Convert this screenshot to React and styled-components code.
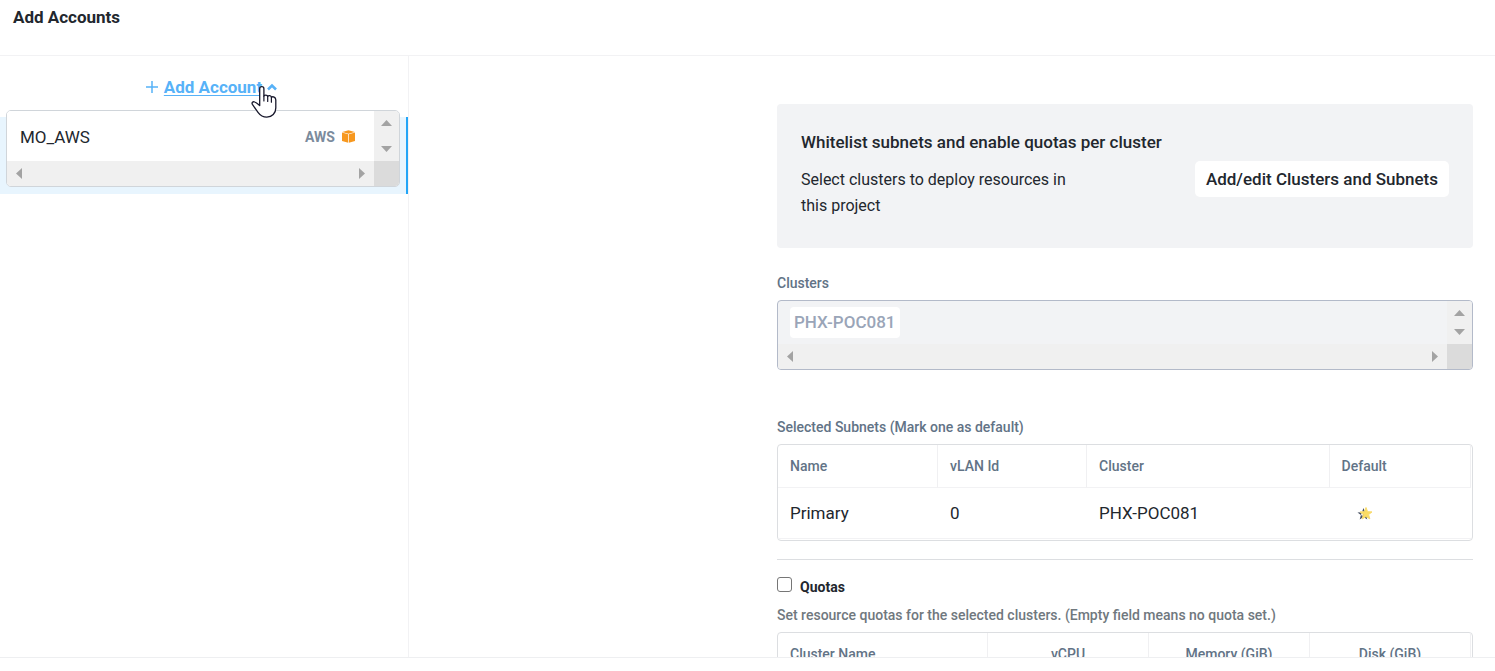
import React from "react";
import styled, { createGlobalStyle, css } from "styled-components";

const GlobalStyle = createGlobalStyle`
  *, *::before, *::after { box-sizing: border-box; }
  body {
    margin: 0;
    background: #fff;
    color: #22272e;
    font-family: Roboto, "Liberation Sans", sans-serif;
    font-size: 17px;
    line-height: 26px;
  }
`;

const Page = styled.div`
  height: 100vh;
  display: flex;
  flex-direction: column;
  overflow: hidden;
`;

const Header = styled.header`
  flex: none;
  padding: 4px 13px 25px;
  border-bottom: 1px solid #f2f2f4;
`;

const Title = styled.h1`
  margin: 0;
  font-size: 17px;
  line-height: 26px;
  font-weight: 700;
`;

const Body = styled.div`
  flex: 1;
  min-height: 0;
  display: flex;
`;

const Footer = styled.footer`
  flex: none;
  height: 14px;
  border-top: 1px solid #eeeff1;
`;

const Sidebar = styled.aside`
  position: relative;
  flex: none;
  width: 409px;
  border-right: 1px solid #f2f2f4;
`;

const AddRow = styled.div`
  height: 61px;
  display: flex;
  align-items: center;
  justify-content: center;
  padding-left: 14px;
`;

const AddButton = styled.button`
  display: flex;
  align-items: center;
  gap: 5px;
  padding: 0;
  border: 0;
  background: none;
  color: #57b2f8;
  font: 700 17px/26px Roboto, "Liberation Sans", sans-serif;
  cursor: pointer;
`;

const AddLabel = styled.span`
  text-decoration: underline;
  text-decoration-thickness: 1px;
  text-underline-offset: 2px;
`;

const SelectedAccount = styled.div`
  height: 77px;
  background: #e8f5fe;
  border-right: 2px solid #22a5f7;
`;

const Menu = styled.div`
  position: absolute;
  top: 54px;
  left: 6px;
  right: 8px;
  background: #fff;
  border: 1px solid #d0d5da;
  border-radius: 5px;
  overflow: hidden;
`;

const Pointer = styled.svg`
  position: absolute;
  top: 28px;
  left: 250px;
`;

const MenuItem = styled.button`
  width: 100%;
  height: 50px;
  display: flex;
  align-items: center;
  justify-content: space-between;
  padding: 1px 19px 0 13px;
  border: 0;
  background: #fff;
  color: #22272e;
  font: 400 17px/26px Roboto, "Liberation Sans", sans-serif;
  text-align: left;
`;

const Provider = styled.span`
  display: flex;
  align-items: center;
  gap: 7px;
  color: #7b8b9d;
  font-size: 14px;
  font-weight: 700;
`;

const ScrollGrid = styled.div`
  display: grid;
  grid-template-columns: 1fr 25px;
  grid-template-rows: auto 25px;
`;

const Track = styled.div`
  display: flex;
  flex-direction: ${(p) => (p.$vertical ? "column" : "row")};
  align-items: center;
  justify-content: space-between;
  padding: ${(p) => (p.$vertical ? "9px 0" : "0 9px")};
  background: #f0f0f0;
`;

const Corner = styled.div`
  background: #dbdbdb;
`;

const Content = styled.main`
  flex: 1;
  min-width: 0;
  overflow: hidden;
  padding: 48px 22px 0 368px;
`;

const Banner = styled.section`
  display: flex;
  align-items: center;
  justify-content: space-between;
  gap: 24px;
  height: 144px;
  padding: 0 24px;
  background: #f2f3f5;
  border-radius: 4px;
`;

const BannerTitle = styled.h2`
  margin: 0 0 12px;
  font-size: 17px;
  line-height: 26px;
  font-weight: 500;
  white-space: nowrap;
`;

const BannerCopy = styled.div`
  width: 290px;
  padding-bottom: 4px;
`;

const BannerText = styled.p`
  margin: 0;
  font-size: 16px;
`;

const ActionButton = styled.button`
  flex: none;
  height: 36px;
  padding: 0 11px;
  margin-top: 6px;
  border: 0;
  border-radius: 5px;
  background: #fff;
  color: #22272e;
  font: 500 17px/26px Roboto, "Liberation Sans", sans-serif;
`;

const FieldLabel = styled.h3`
  margin: ${(p) => (p.$far ? "49px" : "27px")} 0 9px;
  color: #627386;
  font-size: 14px;
  line-height: 16px;
  font-weight: 500;
`;

const ClusterBox = styled.div`
  border: 1px solid #b3bac9;
  border-radius: 4px;
  background: #f2f3f5;
  overflow: hidden;
`;

const ChipArea = styled.div`
  padding: 6px 12px;
  height: 43px;
`;

const Chip = styled.span`
  display: inline-block;
  padding: 0 4px;
  border-radius: 4px;
  background: #fff;
  color: #9aa5b8;
  font-weight: 500;
  line-height: 31px;
`;

const TableFrame = styled.div`
  border: 1px solid #dcdee1;
  border-radius: 4px;
  padding: 0 1px 1px 0;
`;

const Table = styled.table`
  width: 100%;
  table-layout: fixed;
  border-collapse: separate;
  border-spacing: 0;
`;

const cell = css`
  padding: 0 12px;
  border-bottom: 1px solid #f2f2f4;
  text-align: ${(p) => (p.$center ? "center" : "left")};
`;

const Th = styled.th`
  ${cell}
  height: 43px;
  border-right: 1px solid #f0f0f2;
  color: #627386;
  font-size: 14px;
  line-height: 16px;
  font-weight: 500;
`;

const Td = styled.td`
  ${cell}
  height: 51px;
`;

const StarCell = styled(Td)`
  padding-left: 27px;
  line-height: 0;
`;

const Divider = styled.hr`
  margin: 18px 0 17px;
  border: 0;
  border-top: 1px solid #dcdee1;
`;

const QuotaToggle = styled.label`
  display: flex;
  align-items: flex-start;
  gap: 8px;
  font-size: 14px;
  line-height: 20px;
  font-weight: 700;
`;

const Checkbox = styled.input`
  appearance: none;
  width: 15px;
  height: 15px;
  margin: 0;
  border: 1px solid #767676;
  border-radius: 3px;
  background: #fff;
`;

const Hint = styled.p`
  margin: 10px 0 9px;
  color: #70787e;
  font-size: 14px;
  line-height: 16px;
  font-weight: 500;
`;

const arrows = {
  up: "0,6 11,6 5.5,0",
  down: "0,0 11,0 5.5,6",
  left: "6,0 6,11 0,5.5",
  right: "0,0 0,11 6,5.5",
};

function Arrow({ dir }) {
  const tall = dir === "left" || dir === "right";
  return (
    <svg width={tall ? 6 : 11} height={tall ? 11 : 6} aria-hidden="true">
      <polygon points={arrows[dir]} fill="#a3a3a3" />
    </svg>
  );
}

function ScrollBox({ children }) {
  return (
    <ScrollGrid>
      {children}
      <Track $vertical>
        <Arrow dir="up" />
        <Arrow dir="down" />
      </Track>
      <Track>
        <Arrow dir="left" />
        <Arrow dir="right" />
      </Track>
      <Corner />
    </ScrollGrid>
  );
}

function PlusIcon() {
  return (
    <svg width="14" height="14" viewBox="0 0 14 14" aria-hidden="true">
      <path d="M7 1v12M1 7h12" stroke="#57b2f8" strokeWidth="1.5" fill="none" />
    </svg>
  );
}

function CaretIcon() {
  return (
    <svg width="10" height="8" viewBox="0 0 10 8" aria-hidden="true">
      <path d="M1 6.5 5 2.500 9 6.500" stroke="#57b2f8" strokeWidth="2.6" fill="none" />
    </svg>
  );
}

function AwsIcon() {
  return (
    <svg width="13" height="13" viewBox="0 0 13 13" aria-hidden="true">
      <path d="M6.5 0.2 12.800 2 6.500 3.800 0.200 2Z" fill="#f7981f" />
      <path d="M0 2.600 6.200 4.300V12.800L0 11Z" fill="#f7981f" />
      <path d="M13 2.600 6.900 4.300V12.800L13 11Z" fill="#f7981f" />
    </svg>
  );
}

function StarIcon() {
  const star = "M6 0 7.6 4.2 12 4.4 8.6 7.1 9.8 11.4 6 9 2.2 11.4 3.4 7.1 0 4.4 4.4 4.2Z";
  return (
    <svg width="16" height="13" viewBox="0 0 16 13" role="img" aria-label="Default subnet">
      <path d={star} transform="translate(.5 1)" fill="#4b5364" />
      <path d="M5.500 4 7 5.500 5.500 9 4 8Z" fill="#fff" />
      <path d={star} transform="translate(3 .5)" fill="#fbdc64" stroke="#f8da6c" strokeWidth="1" />
    </svg>
  );
}

function HandPointer() {
  return (
    <Pointer width="28" height="35" viewBox="0 0 28 35" aria-hidden="true">
      <path
        d="M9.7 21.5V4.8a2.1 2.1 0 0 1 4.2 0V12.2c.4-1.6 3.4-1.6 3.8.3.8-1.3 3.3-1 3.7.7 1.5-1 4.4-.3 4.4 2.8V24c0 5.2-3.8 9.2-9 9.2-4.6 0-6.6-1.8-8.8-4.8L2.4 20.4c-1-1.6.5-3.2 2.300-2.400 2 .8 3.400 2.200 5 3.500Z"
        fill="#fff"
        stroke="#17172b"
        strokeWidth="1.3"
        strokeLinejoin="round"
      />
      <path d="M13.9 12v5M17.7 12.5v5M21.4 13.2v5" stroke="#17172b" strokeWidth="1.2" fill="none" strokeLinecap="round" />
    </Pointer>
  );
}

export default function App() {
  return (
    <>
      <GlobalStyle />
      <Page>
        <Header>
          <Title>Add Accounts</Title>
        </Header>
        <Body>
          <Sidebar>
            <AddRow>
              <AddButton type="button" aria-expanded="true">
                <PlusIcon />
                <AddLabel>Add Account</AddLabel>
                <CaretIcon />
              </AddButton>
            </AddRow>
            <SelectedAccount />
            <Menu>
              <ScrollBox>
                <MenuItem type="button">
                  MO_AWS
                  <Provider>
                    AWS
                    <AwsIcon />
                  </Provider>
                </MenuItem>
              </ScrollBox>
            </Menu>
            <HandPointer />
          </Sidebar>
          <Content>
            <Banner>
              <BannerCopy>
                <BannerTitle>Whitelist subnets and enable quotas per cluster</BannerTitle>
                <BannerText>Select clusters to deploy resources in this project</BannerText>
              </BannerCopy>
              <ActionButton type="button">Add/edit Clusters and Subnets</ActionButton>
            </Banner>

            <FieldLabel>Clusters</FieldLabel>
            <ClusterBox>
              <ScrollBox>
                <ChipArea>
                  <Chip>PHX-POC081</Chip>
                </ChipArea>
              </ScrollBox>
            </ClusterBox>

            <FieldLabel $far>Selected Subnets (Mark one as default)</FieldLabel>
            <TableFrame>
              <Table>
                <colgroup>
                  <col style={{ width: "23.1%" }} />
                  <col style={{ width: "21.5%" }} />
                  <col style={{ width: "35%" }} />
                  <col />
                </colgroup>
                <thead>
                  <tr>
                    <Th>Name</Th>
                    <Th>vLAN Id</Th>
                    <Th>Cluster</Th>
                    <Th>Default</Th>
                  </tr>
                </thead>
                <tbody>
                  <tr>
                    <Td>Primary</Td>
                    <Td>0</Td>
                    <Td>PHX-POC081</Td>
                    <StarCell>
                      <StarIcon />
                    </StarCell>
                  </tr>
                </tbody>
              </Table>
            </TableFrame>

            <Divider />
            <QuotaToggle>
              <Checkbox type="checkbox" />
              Quotas
            </QuotaToggle>
            <Hint>Set resource quotas for the selected clusters. (Empty field means no quota set.)</Hint>
            <TableFrame>
              <Table>
                <colgroup>
                  <col style={{ width: "30.3%" }} />
                  <col />
                  <col />
                  <col />
                </colgroup>
                <thead>
                  <tr>
                    <Th>Cluster Name</Th>
                    <Th $center>vCPU</Th>
                    <Th $center>Memory (GiB)</Th>
                    <Th $center>Disk (GiB)</Th>
                  </tr>
                </thead>
              </Table>
            </TableFrame>
          </Content>
        </Body>
        <Footer />
      </Page>
    </>
  );
}
